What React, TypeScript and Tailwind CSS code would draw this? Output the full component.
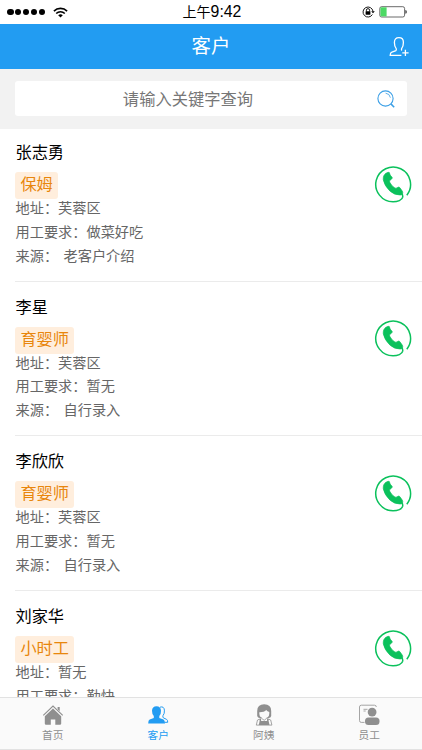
type Customer = {
  name: string;
  job: string;
  address: string;
  requirement: string;
  source: string;
};

const customers: Customer[] = [
  { name: "张志勇", job: "保姆", address: "芙蓉区", requirement: "做菜好吃", source: "老客户介绍" },
  { name: "李星", job: "育婴师", address: "芙蓉区", requirement: "暂无", source: "自行录入" },
  { name: "李欣欣", job: "育婴师", address: "芙蓉区", requirement: "暂无", source: "自行录入" },
  { name: "刘家华", job: "小时工", address: "暂无", requirement: "勤快", source: "自行录入" },
];

function StatusBar() {
  return (
    <div className="grid h-6 shrink-0 grid-cols-3 items-center bg-white pr-[15px] pl-[7px] text-black">
      <div className="flex items-center">
        <div className="flex gap-[1.3px]">
          {[0, 1, 2, 3, 4].map((dot) => (
            <span key={dot} className="h-[6.6px] w-[6.6px] rounded-full bg-black" />
          ))}
        </div>
        <svg className="ml-[8px] h-[11px] w-[15px]" viewBox="0 0 15 11" fill="none" stroke="currentColor" strokeWidth="1.6">
          <path d="M.9 4.1a9.4 9.4 0 0 1 13.2 0" />
          <path d="M3.2 6.5a6.1 6.1 0 0 1 8.6 0" />
          <path d="M7.5 10.6 5.2 8.3a3.3 3.3 0 0 1 4.6 0Z" fill="currentColor" stroke="none" />
        </svg>
      </div>
      <div className="pl-[10px] text-center text-[14px] leading-[22px] whitespace-nowrap">
        上午<span className="text-[15.8px]">9:42</span>
      </div>
      <div className="flex items-center justify-end">
        <svg className="mr-[4px] h-3 w-[13px]" viewBox="0 0 13 12" fill="none" stroke="currentColor">
          <path d="M10.4 8.5A5 5 0 1 1 11 5.3" strokeWidth=".9" />
          <path d="m9.2 5.2 3.6 0-1.8 2Z" fill="currentColor" stroke="none" />
          <path d="M4.4 5.5V4.2a1.6 1.6 0 0 1 3.2 0v1.3" strokeWidth=".9" />
          <rect x="3.6" y="5.2" width="4.8" height="3.5" rx=".4" fill="currentColor" stroke="none" />
        </svg>
        <svg className="h-3 w-7" viewBox="0 0 28 12">
          <rect x=".8" y=".7" width="24.8" height="10.3" rx="1.8" fill="#fff" stroke="#444" strokeWidth=".8" />
          <path d="M1.4 1.3h6.2v9.1H1.4Z" fill="#4cd964" />
          <path d="M26.4 4.1q1.4.3 1.4 1.8t-1.4 1.8Z" fill="#333" />
        </svg>
      </div>
    </div>
  );
}

function PhoneIcon() {
  return (
    <svg className="h-[37px] w-[38px] shrink-0" viewBox="0 0 38 37" fill="none">
      <path
        d="M32.8 29.2A17.4 17.4 0 1 0 19 35.8c4.6 0 9.2-1.7 9.7-4.6q.2-1.8-.7-3.6"
        stroke="#0bc15c"
        strokeWidth="1.5"
      />
      <path
        d="M9.8 9.8q1.2-2.8 4.3-3.5l1.2.2.9 2.6 2 2.4q.1 1.200-1 1.900l-1.500 1.200q-.3.800.2 1.900 1.600 3.500 5 5.500 1.100.500 1.900-.1l1.800-.8q.9 0 1.500.9l2.300 3.300q.6 1.200.1 2.400-.6 1.500-2.400 1.300-5.700.200-10.300-4.100-5.300-5.200-6.500-11-.2-2.300.5-4.100Z"
        fill="#0bc15c"
        stroke="#0bc15c"
        strokeWidth=".7"
        strokeLinejoin="round"
      />
    </svg>
  );
}

function CustomerItem({ customer }: { customer: Customer }) {
  return (
    <li className="ml-[15px] flex h-[154.7px] shrink-0 justify-between border-b border-[#ebebeb] pt-[13px] pr-[10px] first:h-[152.7px] first:pt-[11px]">
      <div className="flex flex-col items-start">
        <h2 className="pl-[.5px] text-[16.2px] leading-6 text-black">{customer.name}</h2>
        <span className="mt-2 h-[27px] rounded-[3px] bg-[#ffeedd] px-[5.4px] text-[16.2px] leading-[25px] text-[#e8860c]">
          {customer.job}
        </span>
        <div className="flex flex-col gap-[4px] pl-[.5px] text-[14.2px] leading-[19.8px] text-[#666]">
          <p>地址：{customer.address}</p>
          <p>用工要求：{customer.requirement}</p>
          <p>
            来源： <span className="pl-[1.5px]">{customer.source}</span>
          </p>
        </div>
      </div>
      <button type="button" aria-label="拨打电话" className="mt-[25.5px] h-[37px]">
        <PhoneIcon />
      </button>
    </li>
  );
}

function HomeIcon() {
  return (
    <svg className="h-[22px] w-[22px]" viewBox="0 0 22 22" fill="none">
      <path d="M1.3 11.3 11 2l9.7 9.3" stroke="#8f8f8f" strokeWidth="1.1" />
      <path d="M15.6 2.9h2.1v4.3l-2.1-2Z" fill="#8f8f8f" />
      <path d="m11 4.5 8.2 7.8v7.2q0 1.3-1.3 1.3h-4.600v-5.400H8.800v5.400H4.100q-1.300 0-1.300-1.300v-7.200Z" fill="#8f8f8f" />
    </svg>
  );
}

function CustomersIcon() {
  return (
    <svg className="h-[22px] w-[22px]" viewBox="0 0 22 22" fill="none">
      <path
        d="M13 3.2q3.9-1.3 4.4 2.9.3 3.7-1.4 5.5-.5 1.5.4 2.3l3.1 1.4q1.4.9 1.2 3h-3.1"
        stroke="#229cf2"
        strokeWidth="1"
      />
      <path
        d="M5 6.8q.2-4.600 4.500-4.600T14 6.800q.2 3-1.700 5.200v2l4.200 1.600q1.500.8 1.500 3.900H1.200q0-3.200 1.500-3.900l4.100-1.600v-2Q4.900 9.700 5 6.800Z"
        fill="#229cf2"
      />
    </svg>
  );
}

function NannyIcon() {
  return (
    <svg className="h-[22px] w-[22px]" viewBox="0 0 22 22" fill="none">
      <path d="M4.2 12V6.9Q4.300.3 11.200.3t7 6.600V12q-.5 2-2.500 2H6.800q-2.100 0-2.600-2Z" fill="#8f8f8f" />
      <path d="M6.300 8.200q4.900.1 6.900-2.200 1.100 1.600 3.100 2v1.600q-.2 4.800-5 4.800t-5-4.800Z" fill="#fafafa" />
      <path d="m8.500 14.300-4 1.700-1.200 5.100h15.600l-1.200-5.100-4-1.700-2.500 2Z" fill="#fafafa" stroke="#8f8f8f" strokeWidth=".8" />
      <path d="M6.600 14.900h1.500v2h6v-2h1.500v2.200l.9 4H5.800l.8-4Z" fill="#8f8f8f" />
    </svg>
  );
}

function StaffIcon() {
  return (
    <svg className="h-[22px] w-[22px]" viewBox="0 0 22 22" fill="none" stroke="#9b9b9b" strokeWidth=".9">
      <path d="M6.500 18.400H3.300Q1.500 18.400 1.500 16.600V3q0-1.800 1.800-1.800h13.200q1.800 0 1.800 1.800" />
      <path d="M5.500 5.300h4M5.500 7h2.200" />
      <circle cx="14.1" cy="8.1" r="4.4" fill="#8f8f8f" stroke="none" />
      <rect x="7" y="13.6" width="14.5" height="7.5" rx="3.5" fill="#8f8f8f" stroke="none" />
    </svg>
  );
}

const tabs = [
  { label: "首页", icon: <HomeIcon />, active: false },
  { label: "客户", icon: <CustomersIcon />, active: true },
  { label: "阿姨", icon: <NannyIcon />, active: false },
  { label: "员工", icon: <StaffIcon />, active: false },
];

export default function App() {
  return (
    <div className="flex h-[750px] w-[422px] flex-col overflow-hidden bg-white font-['Liberation_Sans','Noto_Sans_CJK_SC',sans-serif]">
      <StatusBar />

      <header className="grid h-[45px] shrink-0 grid-cols-3 items-center bg-[#229cf2] px-[13px] text-white">
        <span />
        <h1 className="pb-[2px] text-center text-[19.4px] leading-[42px]">客户</h1>
        <button type="button" aria-label="添加客户" className="justify-self-end">
          <svg className="h-[21px] w-[20px]" viewBox="0 0 20 21" fill="none" stroke="currentColor" strokeWidth="1.3">
            <path d="M12.4 19.3H1.2q0-2.600 1.700-3.200l4-1.500q.8-.6.300-2Q5.400 10.500 5.400 6.400q0-4.700 4.500-4.700t4.500 4.700q0 4.100-1.800 6.200-.4 1.400.3 1.900" />
            <path d="M13.3 16.8h6.3M16.4 13.7V20" />
          </svg>
        </button>
      </header>

      <div className="h-[60px] shrink-0 bg-[#f2f2f2] px-[15px] pt-3">
        <div className="flex h-[35px] items-center rounded-[3px] bg-white pr-[12px]">
          <input
            type="text"
            placeholder="请输入关键字查询"
            className="min-w-0 flex-1 pr-[16px] text-center text-[16.3px] leading-6 outline-none placeholder:text-[#777]"
          />
          <svg className="h-[18px] w-[18px]" viewBox="0 0 18 18" fill="none" stroke="#3b9fe6" strokeWidth="1.1">
            <circle cx="8.5" cy="8.5" r="7.6" />
            <path d="M8.6 3.2q4.2.4 4.8 4.5" strokeWidth=".8" />
            <path d="m13.9 13.9 3.3 3.3" strokeWidth="1.5" />
          </svg>
        </div>
      </div>

      <ul className="flex min-h-0 flex-1 flex-col overflow-hidden bg-white">
        {customers.map((customer) => (
          <CustomerItem key={customer.name} customer={customer} />
        ))}
      </ul>

      <nav className="grid h-[53px] shrink-0 grid-cols-4 border-y border-[#e2e2e2] bg-[#fafafa]">
        {tabs.map((tab) => (
          <button
            key={tab.label}
            type="button"
            className={`flex flex-col items-center pt-[6px] text-[10.7px] leading-[18px] ${
              tab.active ? "text-[#229cf2]" : "text-[#8f8f8f]"
            }`}
          >
            {tab.icon}
            {tab.label}
          </button>
        ))}
      </nav>
    </div>
  );
}
